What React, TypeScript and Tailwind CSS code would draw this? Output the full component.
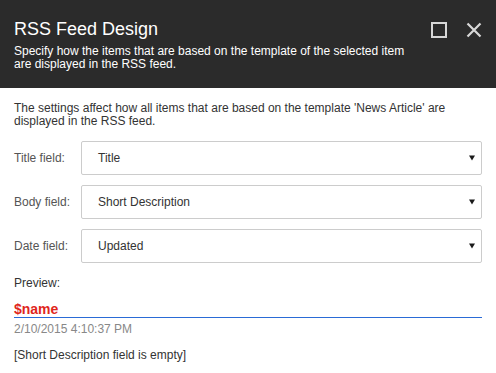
import React from "react";

const fields = [
  { label: "Title field:", value: "Title" },
  { label: "Body field:", value: "Short Description" },
  { label: "Date field:", value: "Updated" },
];

const FieldRow = ({ label, value }: { label: string; value: string }) => (
  <div className="flex items-center">
    <div className="w-[67px] shrink-0 text-[12px] text-[#555]">{label}</div>
    <div className="flex h-[34px] flex-1 items-center justify-between rounded-[2px] border border-[#cccccc] bg-white pl-[16px] pr-[6px]">
      <span className="text-[12px] text-[#333]">{value}</span>
      <svg width="6" height="6" viewBox="0 0 6 6">
        <path d="M0 0.5H6L3 5.5Z" fill="#1a1a1a" />
      </svg>
    </div>
  </div>
);

export default function App() {
  return (
    <div
      className="h-[373px] w-[496px] overflow-hidden bg-white"
      style={{ fontFamily: '"Liberation Sans", Arial, sans-serif' }}
    >
      <header className="flex h-[88px] justify-between bg-[#2b2b2b] pl-[14px] pr-[14px] pt-[17px]">
        <div>
          <h1 className="text-[18px] leading-[24px] text-white">RSS Feed Design</h1>
          <p className="mt-[4px] text-[12px] leading-[13px] text-white">
            Specify how the items that are based on the template of the selected item
            <br />
            are displayed in the RSS feed.
          </p>
        </div>
        <div className="flex gap-[19px] pt-[5px]">
          <svg width="16" height="16" viewBox="0 0 16 16">
            <rect x="1" y="1" width="14" height="14" fill="none" stroke="#d8d8d8" strokeWidth="2" />
          </svg>
          <svg width="16" height="16" viewBox="0 0 16 16">
            <path d="M1.5 1.5L14.5 14.5M14.5 1.5L1.5 14.5" stroke="#d8d8d8" strokeWidth="2.2" />
          </svg>
        </div>
      </header>
      <main className="w-[496px] px-[14px] pt-[14px]">
        <p className="text-[12px] leading-[13px] text-[#333]">
          The settings affect how all items that are based on the template 'News Article' are
          <br />
          displayed in the RSS feed.
        </p>
        <div className="mt-[13px] flex flex-col gap-[10px]">
          {fields.map((f) => (
            <FieldRow key={f.label} label={f.label} value={f.value} />
          ))}
        </div>
        <div className="mt-[13px] text-[12px] leading-[14px] text-[#333]">Preview:</div>
        <div className="mt-[11px] w-[468px] border-b border-[#2a6bd6] text-[14px] font-bold leading-[16px] text-[#e0261c]">
          $name
        </div>
        <div className="mt-[4px] text-[12px] leading-[14px] text-[#888]">2/10/2015 4:10:37 PM</div>
        <div className="mt-[12px] text-[12px] leading-[14px] text-[#333]">
          [Short Description field is empty]
        </div>
      </main>
    </div>
  );
}
